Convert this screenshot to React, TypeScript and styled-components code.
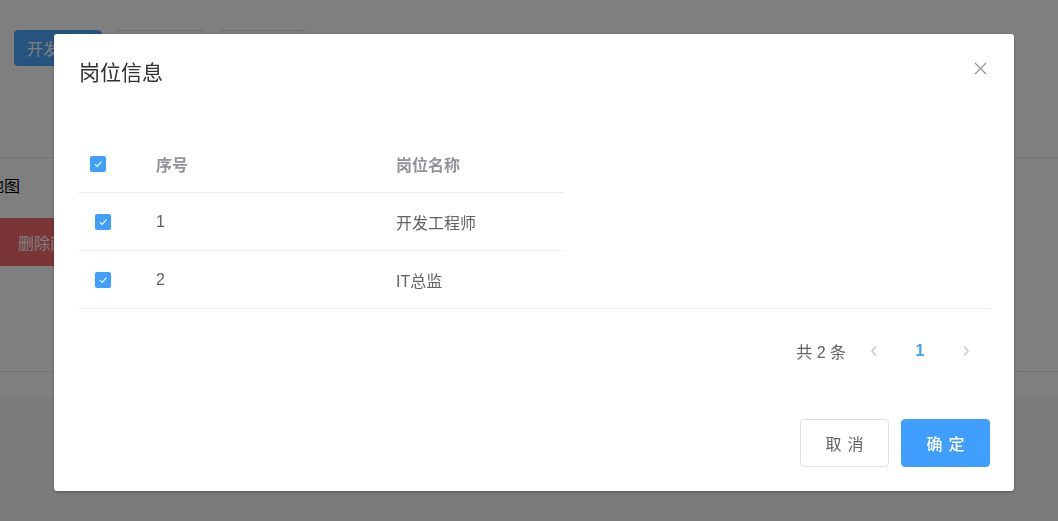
import React from 'react'
import styled, { createGlobalStyle } from 'styled-components'

const GlobalStyle = createGlobalStyle`
  html, body {
    margin: 0;
    padding: 0;
    background: #f6f6f6;
    font-family: "Liberation Sans", "Noto Sans CJK SC", sans-serif;
    overflow: hidden;
  }
  * {
    box-sizing: border-box;
  }
`

type Post = {
  id: number
  name: string
}

const posts: Post[] = [
  { id: 1, name: '开发工程师' },
  { id: 2, name: 'IT总监' },
]

const Check: React.FC<{ inset?: number }> = ({ inset = 0 }) => (
  <CheckBox $inset={inset}>
    <svg width="10" height="10" viewBox="0 0 10 10">
      <polyline points="1.8,5.2 4.2,7.4 8.4,2.6" fill="none" stroke="#fff" strokeWidth="1.1" />
    </svg>
  </CheckBox>
)

const App: React.FC = () => {
  return (
    <>
      <GlobalStyle />
      <Page>
        <Toolbar>
          <PageButton>导入</PageButton>
          <PageButton $primary>开发工具</PageButton>
          <PageButton>修改</PageButton>
          <PageButton>导出</PageButton>
        </Toolbar>
        <Section>
          <SectionLabel>地图</SectionLabel>
          <DangerBar>删除岗位</DangerBar>
        </Section>
        <SectionFoot />
      </Page>

      <Mask />

      <Dialog>
        <DialogHeader>
          <Title>岗位信息</Title>
          <CloseButton aria-label="close">
            <svg width="13" height="13" viewBox="0 0 13 13">
              <path d="M1 1 L12 12 M12 1 L1 12" stroke="#909399" strokeWidth="1.1" fill="none" />
            </svg>
          </CloseButton>
        </DialogHeader>

        <DialogBody>
          <Table>
            <Row $head>
              <SelectCell>
                <Check />
              </SelectCell>
              <HeadCell>序号</HeadCell>
              <HeadCell>岗位名称</HeadCell>
            </Row>
            {posts.map((p, i) => (
              <Row key={p.id} $last={i === posts.length - 1}>
                <SelectCell>
                  <Check inset={5} />
                </SelectCell>
                <BodyCell>{p.id}</BodyCell>
                <BodyCell>{p.name}</BodyCell>
              </Row>
            ))}
          </Table>

          <Pagination>
            <Total>共 2 条</Total>
            <PagerButton $disabled>
              <svg width="10" height="14" viewBox="0 0 10 14">
                <polyline points="7,2.5 2.8,7 7,11.5" fill="none" stroke="#c0c4cc" strokeWidth="1.3" />
              </svg>
            </PagerButton>
            <PageNumber>1</PageNumber>
            <PagerButton $disabled>
              <svg width="10" height="14" viewBox="0 0 10 14">
                <polyline points="3,2.5 7.2,7 3,11.5" fill="none" stroke="#c0c4cc" strokeWidth="1.3" />
              </svg>
            </PagerButton>
          </Pagination>
        </DialogBody>

        <DialogFooter>
          <Button>取消</Button>
          <Button $primary>确定</Button>
        </DialogFooter>
      </Dialog>
    </>
  )
}

export default App

const Page = styled.div`
  background: #fff;
  height: 397px;
  overflow: hidden;
`

const Toolbar = styled.div`
  display: flex;
  gap: 14px;
  padding-top: 30px;
  margin-left: -86px;
  height: 158px;
  border-bottom: 1px solid #e6e6e6;
`

const PageButton = styled.div<{ $primary?: boolean }>`
  width: 88px;
  height: 36px;
  flex-shrink: 0;
  display: flex;
  align-items: center;
  padding-left: 12px;
  border-radius: 4px;
  font-size: 16px;
  color: ${(p) => (p.$primary ? '#fff' : '#606266')};
  background: ${(p) => (p.$primary ? '#4fa6ff' : '#fff')};
  border: 1px solid ${(p) => (p.$primary ? '#4fa6ff' : '#dcdfe6')};

  &:first-child {
    width: 86px;
  }
`

const Section = styled.div`
  height: 214px;
  border-bottom: 1px solid #e6e6e6;
  padding-top: 18px;
`

const SectionLabel = styled.div`
  margin-left: -12px;
  font-size: 16px;
  color: #000;
  line-height: 22px;
`

const DangerBar = styled.div`
  margin-top: 20px;
  width: 120px;
  height: 48px;
  background: #f56c6c;
  color: #fff;
  font-size: 16px;
  display: flex;
  align-items: center;
  padding-left: 18px;
`

const SectionFoot = styled.div`
  height: 24px;
`

const Mask = styled.div`
  position: fixed;
  inset: 0;
  background: rgba(0, 0, 0, 0.5);
`

const Dialog = styled.div`
  position: fixed;
  left: 54px;
  top: 34px;
  width: 960px;
  height: 457px;
  background: #fff;
  border-radius: 3px;
  box-shadow: 0 1px 3px rgba(0, 0, 0, 0.3);
  display: flex;
  flex-direction: column;
`

const DialogHeader = styled.div`
  position: relative;
  padding: 27px 24px 0 25px;
`

const Title = styled.div`
  font-size: 21px;
  line-height: 24px;
  color: #303133;
`

const CloseButton = styled.div`
  position: absolute;
  top: 28px;
  right: 27px;
  width: 13px;
  height: 13px;
  display: flex;
`

const DialogBody = styled.div`
  padding: 50px 24px 0;
`

const Table = styled.div`
  border-bottom: 1px solid #ebeef5;
`

const Row = styled.div<{ $head?: boolean; $last?: boolean }>`
  display: grid;
  grid-template-columns: 68px 240px 178px;
  height: ${(p) => (p.$last ? 57 : 58)}px;
  align-items: center;
  & > * {
    height: 100%;
    border-bottom: ${(p) => (p.$last ? 'none' : '1px solid #ebeef5')};
  }
`

const SelectCell = styled.div`
  display: flex;
  align-items: center;
  padding-left: 12px;
`

const CheckBox = styled.span<{ $inset: number }>`
  margin-left: ${(p) => p.$inset}px;
  width: 16px;
  height: 16px;
  border-radius: 2px;
  background: #409eff;
  display: flex;
  align-items: center;
  justify-content: center;
`

const HeadCell = styled.div`
  display: flex;
  align-items: center;
  padding-left: 10px;
  font-size: 16px;
  font-weight: bold;
  color: #909399;
`

const BodyCell = styled.div`
  display: flex;
  align-items: center;
  padding-left: 10px;
  font-size: 16px;
  color: #606266;
`

const Pagination = styled.div`
  display: flex;
  justify-content: flex-end;
  align-items: center;
  height: 36px;
  margin-top: 24px;
  padding-right: 6px;
  gap: 10px;
`

const Total = styled.span`
  font-size: 16px;
  color: #606266;
`

const PagerButton = styled.div<{ $disabled?: boolean }>`
  width: 36px;
  height: 36px;
  display: flex;
  align-items: center;
  justify-content: center;
  cursor: ${(p) => (p.$disabled ? 'not-allowed' : 'pointer')};
`

const PageNumber = styled.div`
  width: 36px;
  height: 36px;
  display: flex;
  align-items: center;
  justify-content: center;
  font-size: 16px;
  font-weight: bold;
  color: #409eff;
`

const DialogFooter = styled.div`
  margin-top: auto;
  display: flex;
  justify-content: flex-end;
  gap: 12px;
  padding: 0 24px 24px;
`

const Button = styled.button<{ $primary?: boolean }>`
  width: 89px;
  height: 48px;
  border-radius: 4px;
  font-family: inherit;
  font-size: 16px;
  font-weight: ${(p) => (p.$primary ? 500 : 400)};
  letter-spacing: 6px;
  text-indent: 6px;
  color: ${(p) => (p.$primary ? '#fff' : '#606266')};
  background: ${(p) => (p.$primary ? '#409eff' : '#fff')};
  border: 1px solid ${(p) => (p.$primary ? '#409eff' : '#dcdfe6')};
  display: flex;
  align-items: center;
  justify-content: center;
`
